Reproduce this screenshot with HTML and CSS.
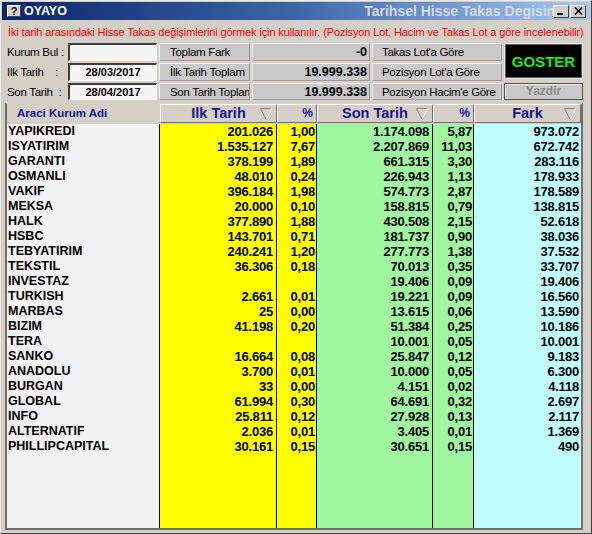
FILE: index.html
```html
<!DOCTYPE html>
<html>
<head>
<meta charset="utf-8">
<link rel="stylesheet" href="styles.css">
</head>
<body>
<div class="window">
  <div class="titlebar">
    <span class="help-icon">?</span>
    <span class="app-name">OYAYO</span>
    <div class="caption"><span class="caption-text">Tarihsel Hisse Takas Degisim</span></div>
    <span class="tb-btn tb-min"><svg width="8" height="8" viewBox="0 0 8 8"><rect x="0" y="6" width="6" height="2" fill="#000"/></svg></span>
    <span class="tb-btn tb-close"><svg width="9" height="8" viewBox="0 0 9 8"><path d="M1 0.5 L8 7.5 M8 0.5 L1 7.5" stroke="#000" stroke-width="1.6"/></svg></span>
  </div>
  <div class="info">İki tarih arasındaki Hisse Takas değişimlerini görmek için kullanılır. (Pozisyon Lot, Hacim ve Takas Lot a göre incelenebilir)</div>
  <div class="controls">
    <div class="label">Kurum Bul :</div>
    <div class="field"></div>
    <div class="btn">Toplam Fark</div>
    <div class="value">-0</div>
    <div class="btn btn-wide">Takas Lot'a Göre</div>
    <div class="goster">GOSTER</div>

    <div class="label">Ilk Tarih    :</div>
    <div class="field">28/03/2017</div>
    <div class="btn">İlk Tarih Toplam</div>
    <div class="value">19.999.338</div>
    <div class="btn btn-wide">Pozisyon Lot'a Göre</div>

    <div class="label">Son Tarih  :</div>
    <div class="field">28/04/2017</div>
    <div class="btn">Son Tarih Toplam</div>
    <div class="value">19.999.338</div>
    <div class="btn btn-wide">Pozisyon Hacim'e Göre</div>
    <div class="yazdir">Yazdir</div>
  </div>
  <div class="grid">
    <div class="grid-head">
      <div class="hname">Araci Kurum Adi</div>
      <div class="hcell"><span></span><span class="htext">Ilk Tarih</span><svg class="sort" width="12" height="12" viewBox="0 0 12 12"><path d="M0.5 0.5 H11.5" stroke="#8a8a8a"/><path d="M0.5 0.5 L6 11.5" stroke="#8a8a8a"/><path d="M11.5 0.5 L6 11.5" stroke="#ffffff"/></svg></div>
      <div class="hcell hpct">%</div>
      <div class="hcell"><span></span><span class="htext">Son Tarih</span><svg class="sort" width="12" height="12" viewBox="0 0 12 12"><path d="M0.5 0.5 H11.5" stroke="#8a8a8a"/><path d="M0.5 0.5 L6 11.5" stroke="#8a8a8a"/><path d="M11.5 0.5 L6 11.5" stroke="#ffffff"/></svg></div>
      <div class="hcell hpct">%</div>
      <div class="hcell"><span></span><span class="htext">Fark</span><svg class="sort" width="12" height="12" viewBox="0 0 12 12"><path d="M0.5 0.5 H11.5" stroke="#8a8a8a"/><path d="M0.5 0.5 L6 11.5" stroke="#8a8a8a"/><path d="M11.5 0.5 L6 11.5" stroke="#ffffff"/></svg></div>
    </div>
    <div class="rows">
      <div class="row"><span class="c-name">YAPIKREDI</span><span class="c-num">201.026</span><span class="c-pct">1,00</span><span class="c-num">1.174.098</span><span class="c-pct">5,87</span><span class="c-fark">973.072</span></div>
      <div class="row"><span class="c-name">ISYATIRIM</span><span class="c-num">1.535.127</span><span class="c-pct">7,67</span><span class="c-num">2.207.869</span><span class="c-pct">11,03</span><span class="c-fark">672.742</span></div>
      <div class="row"><span class="c-name">GARANTI</span><span class="c-num">378.199</span><span class="c-pct">1,89</span><span class="c-num">661.315</span><span class="c-pct">3,30</span><span class="c-fark">283.116</span></div>
      <div class="row"><span class="c-name">OSMANLI</span><span class="c-num">48.010</span><span class="c-pct">0,24</span><span class="c-num">226.943</span><span class="c-pct">1,13</span><span class="c-fark">178.933</span></div>
      <div class="row"><span class="c-name">VAKIF</span><span class="c-num">396.184</span><span class="c-pct">1,98</span><span class="c-num">574.773</span><span class="c-pct">2,87</span><span class="c-fark">178.589</span></div>
      <div class="row"><span class="c-name">MEKSA</span><span class="c-num">20.000</span><span class="c-pct">0,10</span><span class="c-num">158.815</span><span class="c-pct">0,79</span><span class="c-fark">138.815</span></div>
      <div class="row"><span class="c-name">HALK</span><span class="c-num">377.890</span><span class="c-pct">1,88</span><span class="c-num">430.508</span><span class="c-pct">2,15</span><span class="c-fark">52.618</span></div>
      <div class="row"><span class="c-name">HSBC</span><span class="c-num">143.701</span><span class="c-pct">0,71</span><span class="c-num">181.737</span><span class="c-pct">0,90</span><span class="c-fark">38.036</span></div>
      <div class="row"><span class="c-name">TEBYATIRIM</span><span class="c-num">240.241</span><span class="c-pct">1,20</span><span class="c-num">277.773</span><span class="c-pct">1,38</span><span class="c-fark">37.532</span></div>
      <div class="row"><span class="c-name">TEKSTIL</span><span class="c-num">36.306</span><span class="c-pct">0,18</span><span class="c-num">70.013</span><span class="c-pct">0,35</span><span class="c-fark">33.707</span></div>
      <div class="row"><span class="c-name">INVESTAZ</span><span class="c-num"></span><span class="c-pct"></span><span class="c-num">19.406</span><span class="c-pct">0,09</span><span class="c-fark">19.406</span></div>
      <div class="row"><span class="c-name">TURKISH</span><span class="c-num">2.661</span><span class="c-pct">0,01</span><span class="c-num">19.221</span><span class="c-pct">0,09</span><span class="c-fark">16.560</span></div>
      <div class="row"><span class="c-name">MARBAS</span><span class="c-num">25</span><span class="c-pct">0,00</span><span class="c-num">13.615</span><span class="c-pct">0,06</span><span class="c-fark">13.590</span></div>
      <div class="row"><span class="c-name">BIZIM</span><span class="c-num">41.198</span><span class="c-pct">0,20</span><span class="c-num">51.384</span><span class="c-pct">0,25</span><span class="c-fark">10.186</span></div>
      <div class="row"><span class="c-name">TERA</span><span class="c-num"></span><span class="c-pct"></span><span class="c-num">10.001</span><span class="c-pct">0,05</span><span class="c-fark">10.001</span></div>
      <div class="row"><span class="c-name">SANKO</span><span class="c-num">16.664</span><span class="c-pct">0,08</span><span class="c-num">25.847</span><span class="c-pct">0,12</span><span class="c-fark">9.183</span></div>
      <div class="row"><span class="c-name">ANADOLU</span><span class="c-num">3.700</span><span class="c-pct">0,01</span><span class="c-num">10.000</span><span class="c-pct">0,05</span><span class="c-fark">6.300</span></div>
      <div class="row"><span class="c-name">BURGAN</span><span class="c-num">33</span><span class="c-pct">0,00</span><span class="c-num">4.151</span><span class="c-pct">0,02</span><span class="c-fark">4.118</span></div>
      <div class="row"><span class="c-name">GLOBAL</span><span class="c-num">61.994</span><span class="c-pct">0,30</span><span class="c-num">64.691</span><span class="c-pct">0,32</span><span class="c-fark">2.697</span></div>
      <div class="row"><span class="c-name">INFO</span><span class="c-num">25.811</span><span class="c-pct">0,12</span><span class="c-num">27.928</span><span class="c-pct">0,13</span><span class="c-fark">2.117</span></div>
      <div class="row"><span class="c-name">ALTERNATIF</span><span class="c-num">2.036</span><span class="c-pct">0,01</span><span class="c-num">3.405</span><span class="c-pct">0,01</span><span class="c-fark">1.369</span></div>
      <div class="row"><span class="c-name">PHILLIPCAPITAL</span><span class="c-num">30.161</span><span class="c-pct">0,15</span><span class="c-num">30.651</span><span class="c-pct">0,15</span><span class="c-fark">490</span></div>
    </div>
  </div>
</div>
</body>
</html>
```

FILE: styles.css
```css
* { box-sizing: border-box; }
body {
  margin: 0;
  background: #d4d0c8;
  font-family: "Liberation Sans", Arial, sans-serif;
}
.window {
  width: 592px;
  height: 534px;
  display: flex;
  flex-direction: column;
  background: #d4d0c8;
  border: 1px solid;
  border-color: #ececec #404040 #404040 #ececec;
  padding: 1px;
}
.titlebar {
  height: 18px;
  flex: none;
  display: flex;
  align-items: center;
  background: linear-gradient(to right, #0a246a 0%, #3d66a8 50%, #a6caf0 100%);
}
.help-icon {
  width: 14px;
  height: 12px;
  margin-left: 5px;
  background: #d4d0c8;
  border: 1px solid;
  border-color: #ffffff #404040 #404040 #ffffff;
  font-size: 11px;
  font-weight: bold;
  line-height: 10px;
  text-align: center;
  color: #000;
}
.app-name {
  margin-left: 3px;
  color: #ffffff;
  font-weight: bold;
  font-size: 12.5px;
  line-height: 18px;
}
.caption {
  flex: 1;
  overflow: hidden;
  white-space: nowrap;
  text-align: right;
  line-height: 18px;
}
.caption-text {
  display: inline-block;
  margin-right: -6px;
  color: #d6dae4;
  font-weight: bold;
  font-size: 14px;
}
.tb-btn {
  width: 16px;
  height: 13px;
  background: #d4d0c8;
  border: 1px solid;
  border-color: #ffffff #404040 #404040 #ffffff;
  display: flex;
  align-items: center;
  justify-content: center;
}
.tb-close { margin-left: 1px; margin-right: 4px; }
.info {
  height: 23px;
  flex: none;
  padding: 5px 0 0 6px;
  line-height: 15px;
  font-size: 11px;
  color: #ff0000;
  white-space: nowrap;
  overflow: hidden;
  letter-spacing: -0.13px;
}
.controls {
  flex: none;
  display: grid;
  grid-template-columns: 59px 89px 91px 118px 130px 79px;
  grid-template-rows: 18px 18px 17px;
  gap: 2px;
  padding-left: 5px;
}
.label {
  font-size: 11.5px;
  line-height: 18px;
  white-space: pre;
  color: #000;
  letter-spacing: -0.3px;
}
.field {
  background: #f4f4f4;
  border-top: 2px solid #404040;
  border-left: 2px solid #404040;
  border-right: 1px solid #ffffff;
  border-bottom: 1px solid #ffffff;
  font-size: 11px;
  font-weight: bold;
  text-align: center;
  line-height: 15px;
  color: #000;
}
.btn {
  background: #c9c9c9;
  border: 1px solid;
  border-color: #f2f2f2 #9c9c9c #9c9c9c #f2f2f2;
  font-size: 11.5px;
  letter-spacing: -0.3px;
  padding-left: 10px;
  line-height: 16px;
  white-space: nowrap;
  overflow: hidden;
  color: #000;
}
.btn-wide { padding-left: 9px; }
.value {
  background: #c9c9c9;
  border: 1px solid;
  border-color: #f2f2f2 #9c9c9c #9c9c9c #f2f2f2;
  font-size: 12.5px;
  font-weight: bold;
  text-align: right;
  padding-right: 2px;
  line-height: 16px;
  color: #000;
}
.goster {
  grid-row: span 2;
  margin-bottom: 2px;
  background: #000;
  border: 1px solid #e6e6e6;
  box-shadow: inset 1px 1px #606060, inset -1px -1px #606060;
  color: #1ee81e;
  font-size: 15px;
  font-weight: bold;
  display: flex;
  align-items: center;
  justify-content: center;
}
.yazdir {
  background: #c9c9c9;
  border: 1px solid #505050;
  box-shadow: inset 1px 1px #f0f0f0;
  color: #8c8c8c;
  font-size: 12px;
  font-weight: bold;
  text-align: center;
  line-height: 15px;
}
.grid {
  flex: 1;
  margin: 3px 7px 2px 3px;
  border-top: 1px solid #d4d0c8;
  border-left: 2px solid #707070;
  border-right: 2px solid #707070;
  border-bottom: 2px solid #707070;
  display: flex;
  flex-direction: column;
}
.grid-head {
  flex: none;
  height: 20px;
  display: grid;
  grid-template-columns: 153px 117px 40px 116px 41px 1fr;
  align-items: start;
  background: #d4d0c8;
}
.hname {
  padding-left: 10px;
  color: #15158c;
  font-weight: bold;
  font-size: 11.5px;
  line-height: 19px;
}
.hcell {
  height: 19px;
  border: 1px solid;
  border-color: #ffffff #707070 #707070 #ffffff;
  display: grid;
  grid-template-columns: 16px 1fr 16px;
  align-items: center;
  color: #15158c;
  font-weight: bold;
  font-size: 14.5px;
}
.htext { text-align: center; line-height: 17px; }
.sort { justify-self: start; }
.hpct {
  display: block;
  text-align: right;
  padding-right: 3px;
  font-size: 12px;
  line-height: 17px;
}
.rows {
  flex: 1;
  background: linear-gradient(to right,
    #f2f2f2 0, #f2f2f2 152px,
    #000 152px, #000 153px,
    #ffff00 153px, #ffff00 269px,
    #000 269px, #000 270px,
    #ffff00 270px, #ffff00 309px,
    #000 309px, #000 310px,
    #a0f7a0 310px, #a0f7a0 425px,
    #000 425px, #000 426px,
    #a0f7a0 426px, #a0f7a0 466px,
    #000 466px, #000 467px,
    #c0ffff 467px);
}
.row {
  height: 15px;
  display: grid;
  grid-template-columns: 153px 117px 40px 116px 41px 1fr;
  line-height: 15px;
  font-weight: bold;
  color: #000;
  white-space: nowrap;
}
.c-name {
  padding-left: 1px;
  font-size: 12.5px;
}
.c-num {
  text-align: right;
  padding-right: 4px;
  font-size: 13px;
  letter-spacing: -0.2px;
}
.c-pct {
  text-align: right;
  padding-right: 2px;
  font-size: 13px;
  letter-spacing: -0.2px;
}
.c-fark {
  text-align: right;
  padding-right: 2px;
  font-size: 13px;
  letter-spacing: -0.2px;
}
```
